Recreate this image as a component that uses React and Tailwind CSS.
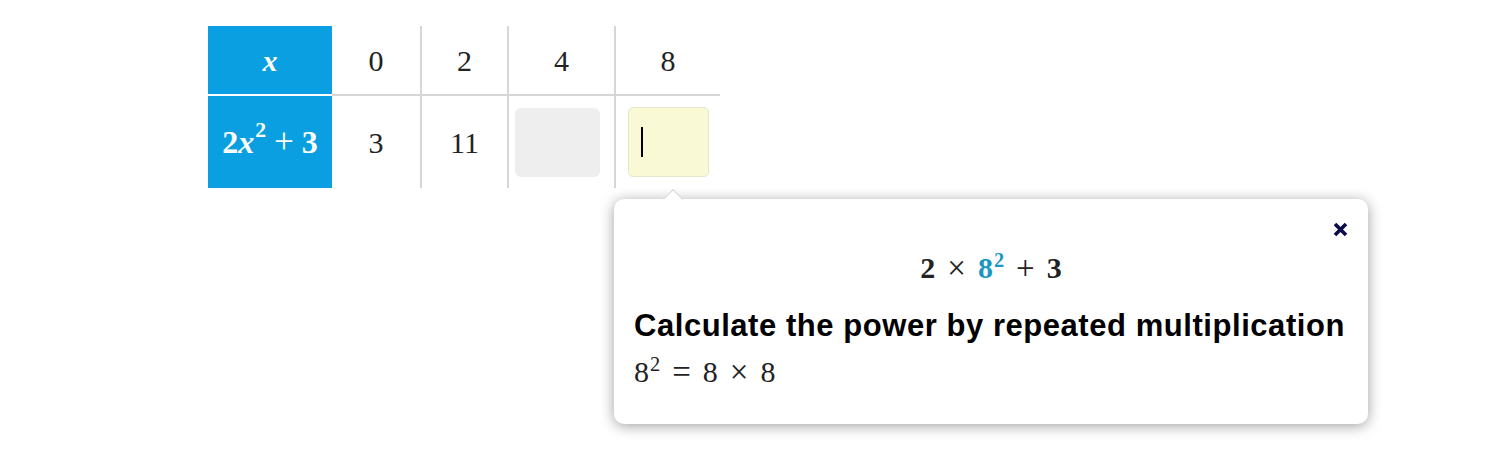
import React from 'react';

const serif = "font-['Liberation_Serif',serif]";

const Sup = ({ children }) => (
  <sup className="text-[0.68em] relative -top-[0.55em] ml-[1px]">{children}</sup>
);

const Op = ({ children }) => (
  <span className="font-normal text-[1.1em] leading-none mx-[12px] relative top-[1px]">{children}</span>
);

const HintPopover = () => (
  <div className="relative ml-[614px] mt-[11px] w-[754px] h-[225px] rounded-[10px] bg-white shadow-[0_2px_14px_rgba(0,0,0,0.38)] px-5 pt-[52px]">
    {/* arrow */}
    <div className="absolute -top-[7px] left-[52px] w-[14px] h-[14px] rotate-45 bg-white border-l border-t border-[#d6d6d6]" />
    <button className="absolute top-[23px] right-[20px] w-[15px] h-[15px] flex items-center justify-center text-[#0b0b4a]">
      <svg width="15" height="15" viewBox="0 0 15 15">
        <path d="M2 2L13 13M13 2L2 13" stroke="currentColor" strokeWidth="3.6" strokeLinecap="butt" />
      </svg>
    </button>
    <div className={`h-[30px] flex items-baseline justify-center text-[30px] leading-none text-[#222] font-bold ${serif}`}>
      2<Op>×</Op><span className="text-[#1a97c2]">8<Sup>2</Sup></span><Op>+</Op>3
    </div>
    <h3 className="mt-[29px] text-[31px] leading-none font-bold text-black font-['Liberation_Sans',Arial,sans-serif] tracking-[0.55px]">
      Calculate the power by repeated multiplication
    </h3>
    <div className={`h-[30px] mt-[14px] flex items-baseline text-[30px] leading-none text-[#222] ${serif}`}>
      8<Sup>2</Sup><Op>=</Op>8<Op>×</Op>8
    </div>
  </div>
);

export default function App() {
  const cols = ['0', '2', '4', '8'];
  return (
    <div className="w-[1500px] h-[458px] bg-white overflow-hidden pt-[26px]">
      <div className={`ml-[208px] grid grid-cols-[124px_88px_87px_107px_106px] grid-rows-[70px_92px] ${serif}`}>
        <div className="bg-[#0a9fe1] text-white italic font-bold text-[30px] flex items-center justify-center border-b-2 border-white">
          x
        </div>
        {cols.map((c, i) => (
          <div
            key={c}
            className={`flex items-center justify-center text-[30px] text-[#222] border-b-2 border-[#d6d6d6] ${i > 0 ? 'border-l-2' : ''}`}
          >
            {c}
          </div>
        ))}
        <div className="bg-[#0a9fe1] text-white font-bold text-[32px] flex items-center justify-center">
          2<span className="italic">x</span><Sup>2</Sup><span className="font-normal text-[1.1em] leading-none mx-[8px]">+</span>3
        </div>
        <div className="flex items-center justify-center text-[30px] text-[#222]">3</div>
        <div className="flex items-center justify-center text-[30px] text-[#222] border-l-2 border-[#d6d6d6]">11</div>
        <div className="flex items-center border-l-2 border-[#d6d6d6] pl-[6px]">
          <div className="w-[85px] h-[69px] rounded-[6px] bg-[#eeeeee]" />
        </div>
        <div className="flex items-center border-l-2 border-[#d6d6d6] pl-[12px]">
          <div className="w-[81px] h-[70px] rounded-[5px] bg-[#f9f9d6] border border-[#e6e6cc] flex items-center pl-[12px]">
            <div className="w-[2px] h-[30px] bg-black" />
          </div>
        </div>
      </div>
      <HintPopover />
    </div>
  );
}
